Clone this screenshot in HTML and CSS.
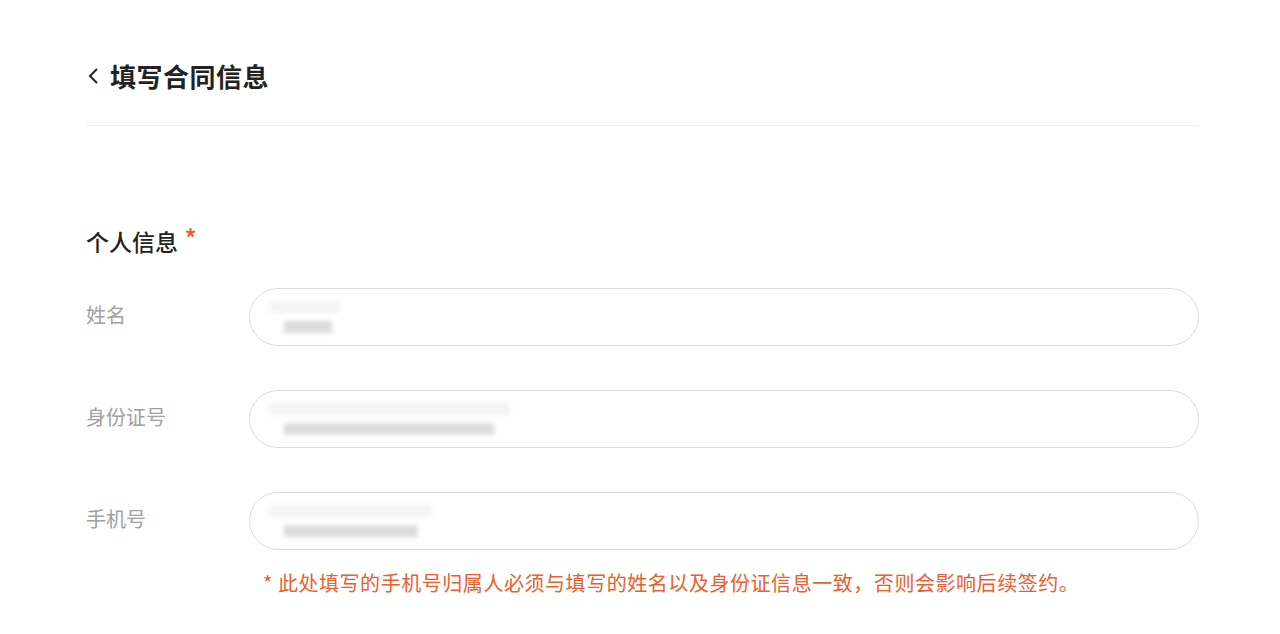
FILE: index.html
```html
<!DOCTYPE html>
<html lang="zh-CN">
<head>
    <meta charset="UTF-8">
    <meta name="viewport" content="width=device-width, initial-scale=1.0">
    <title>填写合同信息</title>
    <link rel="stylesheet" href="styles.css">
</head>
<body>
    <div class="page">
        <!-- Page header with back arrow -->
        <div class="header">
            <svg class="back" width="14" height="20" viewBox="0 0 14 20">
                <polyline points="10,3 3,10 10,17" fill="none" stroke="#222" stroke-width="2"/>
            </svg>
            <h1>填写合同信息</h1>
        </div>

        <!-- Personal info section -->
        <div class="section">
            <h2>个人信息 <span class="star">*</span></h2>

            <div class="row">
                <label>姓名</label>
                <div class="field">
                    <div class="mask">
                        <span class="bar light" style="width:70px"></span>
                        <span class="bar dark" style="width:48px"></span>
                    </div>
                </div>
            </div>

            <div class="row">
                <label>身份证号</label>
                <div class="field">
                    <div class="mask">
                        <span class="bar light" style="width:240px"></span>
                        <span class="bar dark" style="width:210px"></span>
                    </div>
                </div>
            </div>

            <div class="row">
                <label>手机号</label>
                <div class="field">
                    <div class="mask">
                        <span class="bar light" style="width:162px"></span>
                        <span class="bar dark" style="width:134px"></span>
                    </div>
                </div>
            </div>

            <p class="note">* 此处填写的手机号归属人必须与填写的姓名以及身份证信息一致，否则会影响后续签约。</p>
        </div>
    </div>
</body>
</html>
```

FILE: styles.css
```css
/* Page base */
body {
    margin: 0;
    background: #fff;
    font-family: "Noto Sans CJK SC", "Noto Sans", sans-serif;
    color: #222;
}

.page {
    width: 1113px;
    margin-left: 86px;
}

/* Header */
.header {
    display: flex;
    align-items: center;
    padding: 58px 0 31px;
    border-bottom: 1px solid #efefef;
}

.back {
    margin: 0 9px 0 1px;
}

.header h1 {
    margin: 0;
    font-size: 26px;
    line-height: 36px;
    font-weight: 700;
    letter-spacing: 0.5px;
}

/* Section */
.section {
    padding-top: 99px;
}

.section h2 {
    margin: 0 0 31px;
    font-size: 23px;
    line-height: 32px;
    font-weight: 500;
}

.star {
    color: #e8602c;
    font-size: 26px;
    vertical-align: top;
    position: relative;
    top: -3px;
    margin-left: 1px;
}

/* Form rows */
.row {
    display: flex;
    align-items: center;
    margin-bottom: 44px;
}

.row:last-of-type {
    margin-bottom: 19px;
}

.row label {
    width: 163px;
    padding-bottom: 6px;
    font-size: 20px;
    color: #a0a0a0;
}

.field {
    flex: 1;
    height: 56px;
    border: 1px solid #dcdcdc;
    border-radius: 29px;
    display: flex;
    align-items: center;
    padding-left: 20px;
}

/* Blurred, redacted values */
.mask {
    display: flex;
    flex-direction: column;
    gap: 8px;
    filter: blur(2px);
}

.bar {
    display: block;
    height: 12px;
}

.bar.light {
    background: #f4f4f4;
}

.bar.dark {
    margin-left: 14px;
    background: #dcdcdc;
}

/* Warning note */
.note {
    margin: 0 0 0 177px;
    font-size: 20px;
    line-height: 28px;
    letter-spacing: 0.55px;
    color: #e8602c;
}
```
